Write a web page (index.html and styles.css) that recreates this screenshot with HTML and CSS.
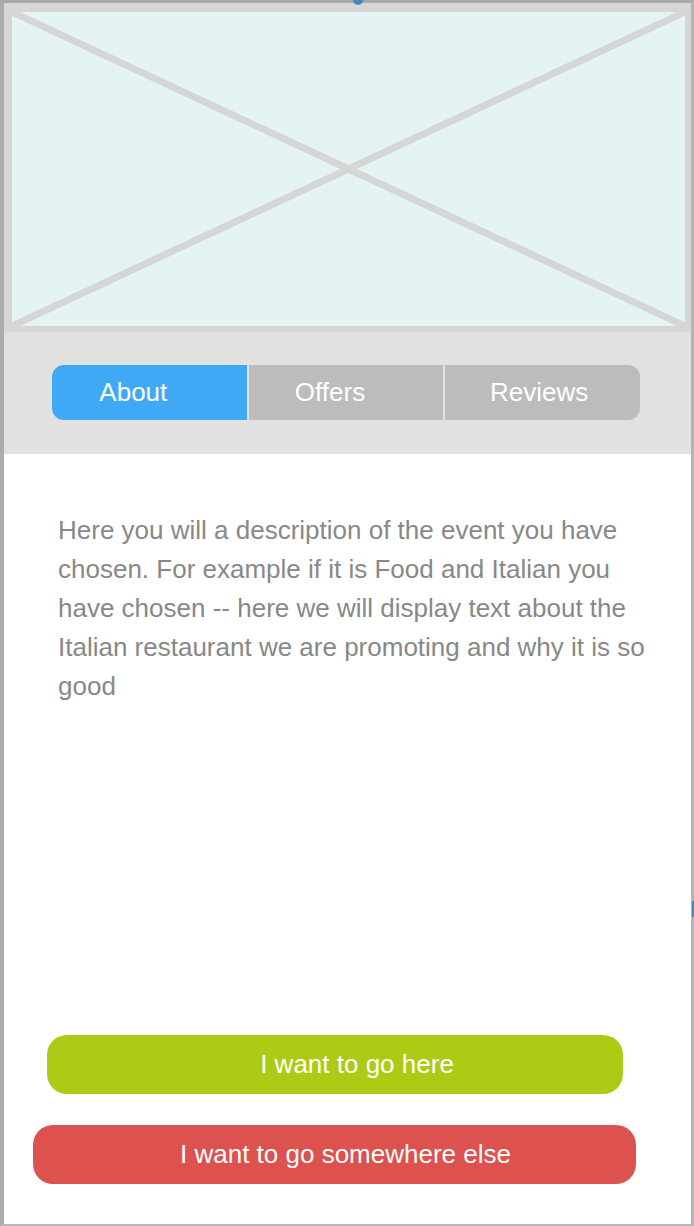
FILE: index.html
```html
<!DOCTYPE html>
<html lang="en">
  <head>
    <meta charset="UTF-8" />
    <meta name="viewport" content="width=device-width, initial-scale=1.0" />
    <title>Event details</title>
    <link rel="stylesheet" href="styles.css">
  </head>
  <body>
    <div class="screen">
      <span class="pin pin-top"></span>
      <span class="pin pin-side"></span>

      <div class="hero">
        <svg class="hero-cross" viewBox="0 0 100 100" preserveAspectRatio="none">
          <line x1="0" y1="0" x2="100" y2="100" />
          <line x1="100" y1="0" x2="0" y2="100" />
        </svg>
      </div>

      <div class="tab-bar">
        <div class="tabs">
          <button type="button" class="tab active">About</button>
          <button type="button" class="tab">Offers</button>
          <button type="button" class="tab tab-last">Reviews</button>
        </div>
      </div>

      <div class="content">
        <p class="description">
          Here you will a description of the event you have chosen. For example if it is Food and Italian you have chosen -- here we will display text about the Italian restaurant we are promoting and why it is so good
        </p>

        <div class="actions">
          <button type="button" class="action go">I want to go here</button>
          <button type="button" class="action elsewhere">I want to go somewhere else</button>
        </div>
      </div>
    </div>
  </body>
</html>
```

FILE: styles.css
```css
* {
  box-sizing: border-box;
}

body {
  margin: 0;
  background-color: #fff;
  font-family: "Liberation Sans", Arial, sans-serif;
}

.screen {
  position: relative;
  width: 694px;
  height: 1226px;
  display: flex;
  flex-direction: column;
  border-style: solid;
  border-width: 3px 3px 2px 4px;
  border-color: #a9a9a9 #b4b4b4 #b8b8b8 #acacac;
  background-color: #fff;
}

.pin {
  position: absolute;
  background-color: #4a86b8;
}

.pin-top {
  top: -3px;
  left: 349px;
  width: 10px;
  height: 5px;
  border-radius: 0 0 5px 5px;
}

.pin-side {
  top: 898px;
  right: -3px;
  width: 2px;
  height: 16px;
}

.hero {
  height: 329px;
  border-style: solid;
  border-width: 9px 6px 6px 8px;
  border-color: #d6d6d6;
  background-color: #e4f3f4;
}

.hero-cross {
  display: block;
  width: 100%;
  height: 100%;
}

.hero-cross line {
  stroke: #d6d6d6;
  stroke-width: 7;
  vector-effect: non-scaling-stroke;
}

.tab-bar {
  height: 122px;
  padding: 33px 0 0 48px;
  background-color: #e1e1e1;
}

.tabs {
  display: grid;
  grid-template-columns: repeat(3, 1fr);
  gap: 2px;
  width: 588px;
  height: 55px;
  border-radius: 12px;
  overflow: hidden;
}

.tab {
  border: none;
  padding: 0 32px 0 0;
  background-color: #bcbcbc;
  color: #fff;
  font-family: inherit;
  font-size: 26px;
}

.tab.active {
  background-color: #3fa9f5;
}

.tab-last {
  padding-right: 7px;
}

.content {
  flex: 1;
  display: flex;
  flex-direction: column;
  padding: 57px 0 40px;
}

.description {
  margin: 0 0 0 54px;
  width: 592px;
  color: #888;
  font-size: 26px;
  line-height: 39px;
}

.actions {
  margin-top: auto;
  display: flex;
  flex-direction: column;
  gap: 31px;
}

.action {
  height: 59px;
  border: none;
  border-radius: 20px;
  color: #fff;
  font-family: inherit;
  font-size: 26px;
}

.go {
  width: 576px;
  margin-left: 43px;
  padding-left: 50px;
  background-color: #adcb14;
}

.elsewhere {
  width: 603px;
  margin-left: 29px;
  padding-left: 28px;
  background-color: #dd524e;
}
```
